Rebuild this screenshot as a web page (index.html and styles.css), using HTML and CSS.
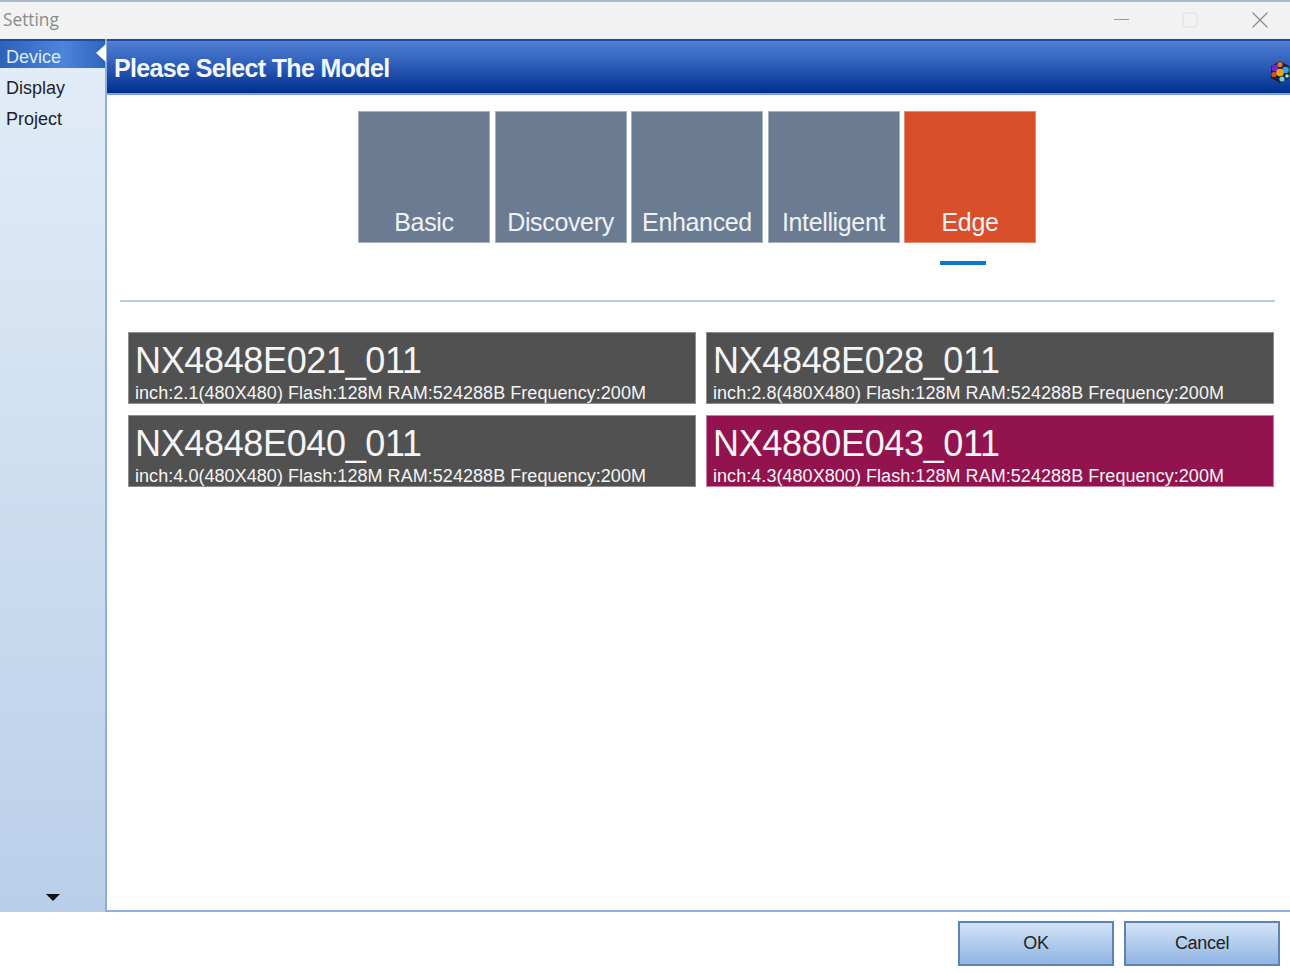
FILE: index.html
```html
<!DOCTYPE html>
<html lang="en">
<head>
<meta charset="utf-8">
<title>Setting</title>
<link rel="stylesheet" href="styles.css">
</head>
<body>
<div class="window">
  <header class="titlebar">
    <span class="title">Setting</span>
    <div class="controls">
      <svg class="ctl ctl-min" width="16" height="16" viewBox="0 0 16 16"><path d="M0 7.500H15" stroke="#9a9a9a" stroke-width="1"/></svg>
      <svg class="ctl ctl-max" width="16" height="16" viewBox="0 0 16 16"><rect x="1" y="1" width="14" height="14" rx="1.500" fill="none" stroke="#e0e0e0" stroke-width="1"/></svg>
      <svg class="ctl ctl-close" width="16" height="16" viewBox="0 0 16 16"><path d="M.5 .5L15.500 15.500M15.500 .5L.5 15.500" stroke="#8a8a8a" stroke-width="1.200"/></svg>
    </div>
  </header>
  <div class="main">
    <nav class="sidebar">
      <div class="nav-item active">Device</div>
      <div class="nav-item">Display</div>
      <div class="nav-item">Project</div>
      <div class="scroll-down"></div>
    </nav>
    <section class="content">
      <div class="heading">
        <h1>Please Select The Model</h1>
        <svg class="cube" width="20" height="24" viewBox="0 0 20 24">
          <path d="M10 1L19 6V18L10 23L1 18V6Z" fill="#16213a"/>
          <circle cx="5" cy="8" r="3.500" fill="#7a22c8"/>
          <circle cx="10" cy="4.500" r="2.600" fill="#e8782a"/>
          <circle cx="15.500" cy="10" r="3.300" fill="#3a9fe0"/>
          <circle cx="4" cy="14.500" r="2.600" fill="#d9541a"/>
          <circle cx="12" cy="19" r="2.600" fill="#72d0c0"/>
          <circle cx="17" cy="16" r="1.800" fill="#a8e4d4"/>
          <circle cx="10" cy="12.500" r="3.800" fill="#f6a313"/>
        </svg>
      </div>
      <div class="tabs">
        <div class="tab">Basic</div>
        <div class="tab">Discovery</div>
        <div class="tab">Enhanced</div>
        <div class="tab">Intelligent</div>
        <div class="tab selected">Edge<span class="tab-mark"></span></div>
      </div>
      <div class="divider"></div>
      <div class="models">
        <div class="model">
          <div class="model-name">NX4848E021_011</div>
          <div class="model-info">inch:2.1(480X480) Flash:128M RAM:524288B Frequency:200M</div>
        </div>
        <div class="model">
          <div class="model-name">NX4848E028_011</div>
          <div class="model-info">inch:2.8(480X480) Flash:128M RAM:524288B Frequency:200M</div>
        </div>
        <div class="model">
          <div class="model-name">NX4848E040_011</div>
          <div class="model-info">inch:4.0(480X480) Flash:128M RAM:524288B Frequency:200M</div>
        </div>
        <div class="model picked">
          <div class="model-name">NX4880E043_011</div>
          <div class="model-info">inch:4.3(480X800) Flash:128M RAM:524288B Frequency:200M</div>
        </div>
      </div>
    </section>
  </div>
  <footer class="footer">
    <button class="btn">OK</button>
    <button class="btn">Cancel</button>
  </footer>
</div>
</body>
</html>
```
FILE: styles.css
```css
* { box-sizing: border-box; }
html, body { margin: 0; padding: 0; }
body { width: 1290px; height: 973px; overflow: hidden; background: #fff; font-family: "Liberation Sans", Arial, sans-serif; }
.window { display: flex; flex-direction: column; width: 1290px; height: 973px; }

.titlebar { display: flex; align-items: center; justify-content: space-between; height: 39px; flex: none; background: #f2f2f2; border-top: 2px solid #a9b8cf; padding-left: 3px; }
.title { font-family: "Open Sans", sans-serif; font-size: 17.300px; color: #8a8a8a; line-height: 32px; margin-bottom: 2px; }
.controls { display: flex; align-items: center; gap: 53px; padding-right: 22px; margin-top: -2px; }
.ctl { display: block; }
.ctl-max { margin-left: -1px; margin-right: 1px; }

.main { display: flex; height: 873px; flex: none; }
.sidebar { position: relative; width: 107px; flex: none; background: linear-gradient(180deg, #e3edf8 0%, #b9cfe9 100%); border-right: 2px solid #8fb0dc; }
.nav-item { height: 31px; padding-left: 6px; font-size: 18px; line-height: 31px; color: #1e1e2a; }
.nav-item.active { position: relative; height: 29px; margin-bottom: 5px; line-height: 32px; color: #dfeaf8; background: linear-gradient(90deg, #2c62b8 0%, #4e85dc 60%, #2f66bb 100%); border-top: 2px solid #1f4aa0; }
.nav-item.active::after { content: ""; position: absolute; right: -1px; top: 3px; border-style: solid; border-width: 9px 10px 9px 0; border-color: transparent #fff transparent transparent; }
.scroll-down { position: absolute; left: 46px; bottom: 11px; border-style: solid; border-width: 7px 7px 0 7px; border-color: #111 transparent transparent transparent; }

.content { flex: 1; min-width: 0; display: flex; flex-direction: column; background: #fff; border-bottom: 2px solid #8fb0dc; }
.heading { display: flex; align-items: center; justify-content: space-between; flex: none; height: 56px; padding-left: 7px; background: linear-gradient(180deg, #5180d4 0%, #2a5ab4 50%, #00308f 100%); border-top: 2px solid #2149a6; border-bottom: 2px solid #7f9fd6; }
.heading h1 { margin: 2px 0 0; font-size: 25px; font-weight: 700; color: #f4f7fd; letter-spacing: -0.650px; }
.cube { flex: none; margin-top: 9px; }

.tabs { display: flex; gap: 4.500px; margin: 16px 0 0 251px; flex: none; }
.tab { position: relative; display: flex; align-items: flex-end; justify-content: center; width: 132px; height: 132px; padding-bottom: 5px; background: #6b7b91; border: 1px solid #a7b1be; font-size: 25px; line-height: 30px; color: #eef2f6; letter-spacing: -0.350px; }
.tab.selected { background: #d84f2a; border-color: #e68a70; }
.tab-mark { position: absolute; left: 35px; top: 149px; width: 46px; height: 4px; background: #0a78d0; }

.divider { flex: none; height: 2px; margin: 57px 15px 0 13px; background: #b5cce4; }

.models { display: grid; grid-template-columns: 568px 568px; grid-auto-rows: 72px; column-gap: 10px; row-gap: 11px; margin: 30px 0 0 21px; }
.model { padding: 9px 0 0 6px; background: #515151; border: 1px solid #8e8e8e; color: #f5f5f5; overflow: hidden; }
.model.picked { background: #93134f; border-color: #c77fa3; }
.model-name { font-size: 36px; line-height: 38px; letter-spacing: -0.350px; white-space: nowrap; }
.model-info { margin-top: 3px; font-size: 18px; line-height: 21px; letter-spacing: 0.050px; white-space: nowrap; }

.footer { display: flex; justify-content: flex-end; gap: 10px; flex: 1; padding: 9px 10px 0 0; background: #fff; }
.btn { width: 156px; height: 45px; padding: 0; background: linear-gradient(180deg, #d4e4f8 0%, #90b3e2 100%); border: 2px solid #5f82b4; font-family: "Liberation Sans", Arial, sans-serif; font-size: 18px; color: #222; letter-spacing: -0.300px; }
```
